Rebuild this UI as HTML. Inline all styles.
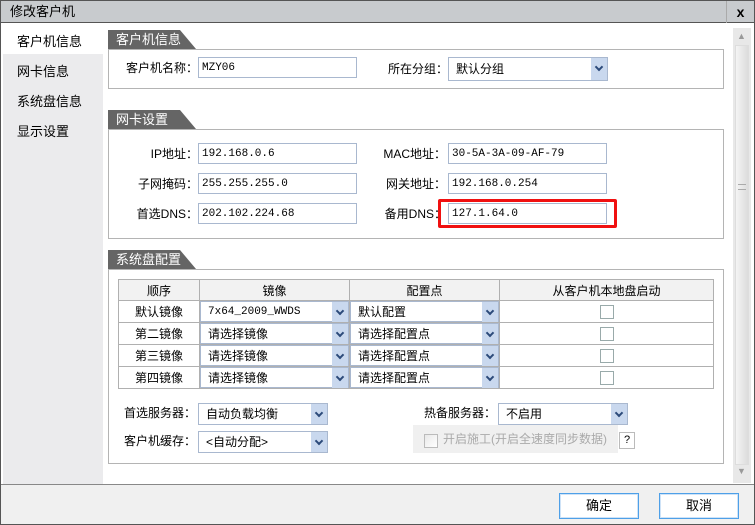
<!DOCTYPE html>
<html><head><meta charset="utf-8"><style>
*{box-sizing:border-box;margin:0;padding:0}
body{width:755px;height:525px;overflow:hidden;background:#fff;font-family:"Liberation Sans","Noto Sans CJK SC",sans-serif;font-size:12px;color:#000;position:relative}
.a{position:absolute}
.in{position:absolute;border:1px solid #a9b8cf;background:#fff;height:21px;display:flex;align-items:center;padding-left:3px;font-family:"Liberation Mono","Noto Sans CJK SC",monospace;font-size:11px}
.sel{position:absolute;border:1px solid #a9b8cf;background:#fff;height:22px;line-height:20px;padding-left:7px}
.sel i{position:absolute;right:0;top:0;width:16px;height:20px;background:#c9d8ee}
.sel i:after{content:"";position:absolute;left:5px;top:6px;width:4px;height:4px;border-right:2px solid #2c4a7a;border-bottom:2px solid #2c4a7a;transform:rotate(45deg)}
.hd{position:absolute;left:108px;height:19px;width:90px;color:#fff;font-size:13px;line-height:19px;padding-left:8px;z-index:1}
.hd:before{content:"";position:absolute;left:0;top:0;width:72px;height:19px;background:#656565;z-index:-1}
.hd:after{content:"";position:absolute;left:72px;top:0;border-bottom:19px solid #656565;border-right:16px solid transparent;z-index:-1}
.box{position:absolute;left:108px;width:616px;border:1px solid #b4b4b4}
.lb{position:absolute;text-align:right;line-height:20px;white-space:nowrap}
table{position:absolute;left:118px;top:279px;border-collapse:collapse;width:596px}
td{border:1px solid #b0b0b0;height:22px;text-align:center;padding:0;position:relative}
tr.h td{background:#f2f2f2;height:21px}
td .sel{display:block;text-align:left;height:21px;border:1px solid #a9b8cf;position:relative}
.cb{display:inline-block;width:14px;height:14px;border:1px solid #9aa;background:#fff;vertical-align:middle}
.btn{position:absolute;top:493px;width:80px;height:26px;border:1px solid #4ea0e8;background:#fff;text-align:center;line-height:24px;font-size:13px;box-shadow:inset 0 0 0 1px #cfe3f7}
</style></head><body>
<div class="a" style="left:0;top:0;width:755px;height:525px;border:1px solid #555"></div>
<div class="a" style="left:1px;top:1px;width:753px;height:22px;background:#c8cbce;border-bottom:1px solid #555;padding-left:9px;line-height:22px;font-size:13px">修改客户机</div>
<div class="a" style="left:726px;top:1px;width:28px;height:22px;border-left:1px solid #aaa;text-align:center;line-height:22px;font-weight:bold;font-size:14px">x</div>
<div class="a" style="left:1px;top:24px;width:102px;height:460px;background:#fff"></div>
<div class="a" style="left:3px;top:54px;width:100px;height:430px;background:#ebebed"></div>
<div class="a" style="left:17px;top:31px;font-size:13px">客户机信息</div>
<div class="a" style="left:17px;top:61px;font-size:13px">网卡信息</div>
<div class="a" style="left:17px;top:91px;font-size:13px">系统盘信息</div>
<div class="a" style="left:17px;top:121px;font-size:13px">显示设置</div>
<div class="a" style="left:733px;top:28px;width:18px;height:455px;background:#e8e8e8"></div>
<div class="a" style="left:735px;top:45px;width:14px;height:420px;background:linear-gradient(90deg,#f4f4f4,#dcdcdc);border:1px solid #ddd"></div>
<div class="a" style="left:737px;top:31px;color:#999;font-size:9px">▲</div>
<div class="a" style="left:737px;top:466px;color:#999;font-size:9px">▼</div>
<div class="a" style="left:738px;top:184px;width:8px;height:6px;border-top:1px solid #aaa;border-bottom:1px solid #aaa"></div>

<div class="hd" style="top:30px">客户机信息</div>
<div class="box" style="top:49px;height:40px"></div>
<div class="lb" style="left:98px;top:58px;width:100px">客户机名称：</div>
<div class="in" style="left:198px;top:57px;width:159px">MZY06</div>
<div class="lb" style="left:350px;top:59px;width:98px">所在分组：</div>
<div class="sel" style="left:448px;top:57px;width:160px;height:24px;line-height:22px">默认分组<i style="height:22px"></i></div>

<div class="hd" style="top:110px">网卡设置</div>
<div class="box" style="top:129px;height:110px"></div>
<div class="lb" style="left:98px;top:144px;width:100px">IP地址：</div>
<div class="in" style="left:198px;top:143px;width:159px">192.168.0.6</div>
<div class="lb" style="left:98px;top:174px;width:100px">子网掩码：</div>
<div class="in" style="left:198px;top:173px;width:159px">255.255.255.0</div>
<div class="lb" style="left:98px;top:204px;width:100px">首选DNS：</div>
<div class="in" style="left:198px;top:203px;width:159px">202.102.224.68</div>
<div class="lb" style="left:346px;top:144px;width:100px">MAC地址：</div>
<div class="in" style="left:448px;top:143px;width:159px">30-5A-3A-09-AF-79</div>
<div class="lb" style="left:346px;top:174px;width:100px">网关地址：</div>
<div class="in" style="left:448px;top:173px;width:159px">192.168.0.254</div>
<div class="lb" style="left:346px;top:204px;width:100px">备用DNS：</div>
<div class="a" style="left:438px;top:199px;width:179px;height:29px;border:3px solid #f01010;border-radius:2px"></div>
<div class="in" style="left:448px;top:203px;width:159px">127.1.64.0</div>

<div class="hd" style="top:250px">系统盘配置</div>
<div class="box" style="top:269px;height:195px"></div>
<table>
<tr class="h"><td style="width:81px">顺序</td><td style="width:150px">镜像</td><td style="width:150px">配置点</td><td>从客户机本地盘启动</td></tr>
<tr><td>默认镜像</td><td><span class="sel" style="font-family:'Liberation Mono',monospace;font-size:11px">7x64_2009_WWDS<i></i></span></td><td><span class="sel">默认配置<i></i></span></td><td><span class="cb"></span></td></tr>
<tr><td>第二镜像</td><td><span class="sel">请选择镜像<i></i></span></td><td><span class="sel">请选择配置点<i></i></span></td><td><span class="cb"></span></td></tr>
<tr><td>第三镜像</td><td><span class="sel">请选择镜像<i></i></span></td><td><span class="sel">请选择配置点<i></i></span></td><td><span class="cb"></span></td></tr>
<tr><td>第四镜像</td><td><span class="sel">请选择镜像<i></i></span></td><td><span class="sel">请选择配置点<i></i></span></td><td><span class="cb"></span></td></tr>
</table>
<div class="lb" style="left:96px;top:403px;width:100px">首选服务器：</div>
<div class="sel" style="left:198px;top:403px;width:130px">自动负载均衡<i></i></div>
<div class="lb" style="left:96px;top:431px;width:100px">客户机缓存：</div>
<div class="sel" style="left:198px;top:431px;width:130px">&lt;自动分配&gt;<i></i></div>
<div class="lb" style="left:396px;top:403px;width:100px">热备服务器：</div>
<div class="sel" style="left:498px;top:403px;width:130px">不启用<i></i></div>
<div class="a" style="left:413px;top:425px;width:205px;height:28px;background:#f0f0f0;color:#aaa;line-height:28px;padding-left:30px">开启施工(开启全速度同步数据)</div>
<div class="a" style="left:424px;top:434px;width:14px;height:14px;border:1px solid #bbb;background:linear-gradient(135deg,#e8e8e8,#fff)"></div>
<div class="a" style="left:619px;top:432px;width:16px;height:17px;border:1px solid #bbb;text-align:center;line-height:15px;font-size:11px">?</div>

<div class="a" style="left:1px;top:484px;width:753px;height:40px;background:#f0f0f0;border-top:1px solid #888"></div>
<div class="btn" style="left:559px">确定</div>
<div class="btn" style="left:659px">取消</div>
</body></html>
